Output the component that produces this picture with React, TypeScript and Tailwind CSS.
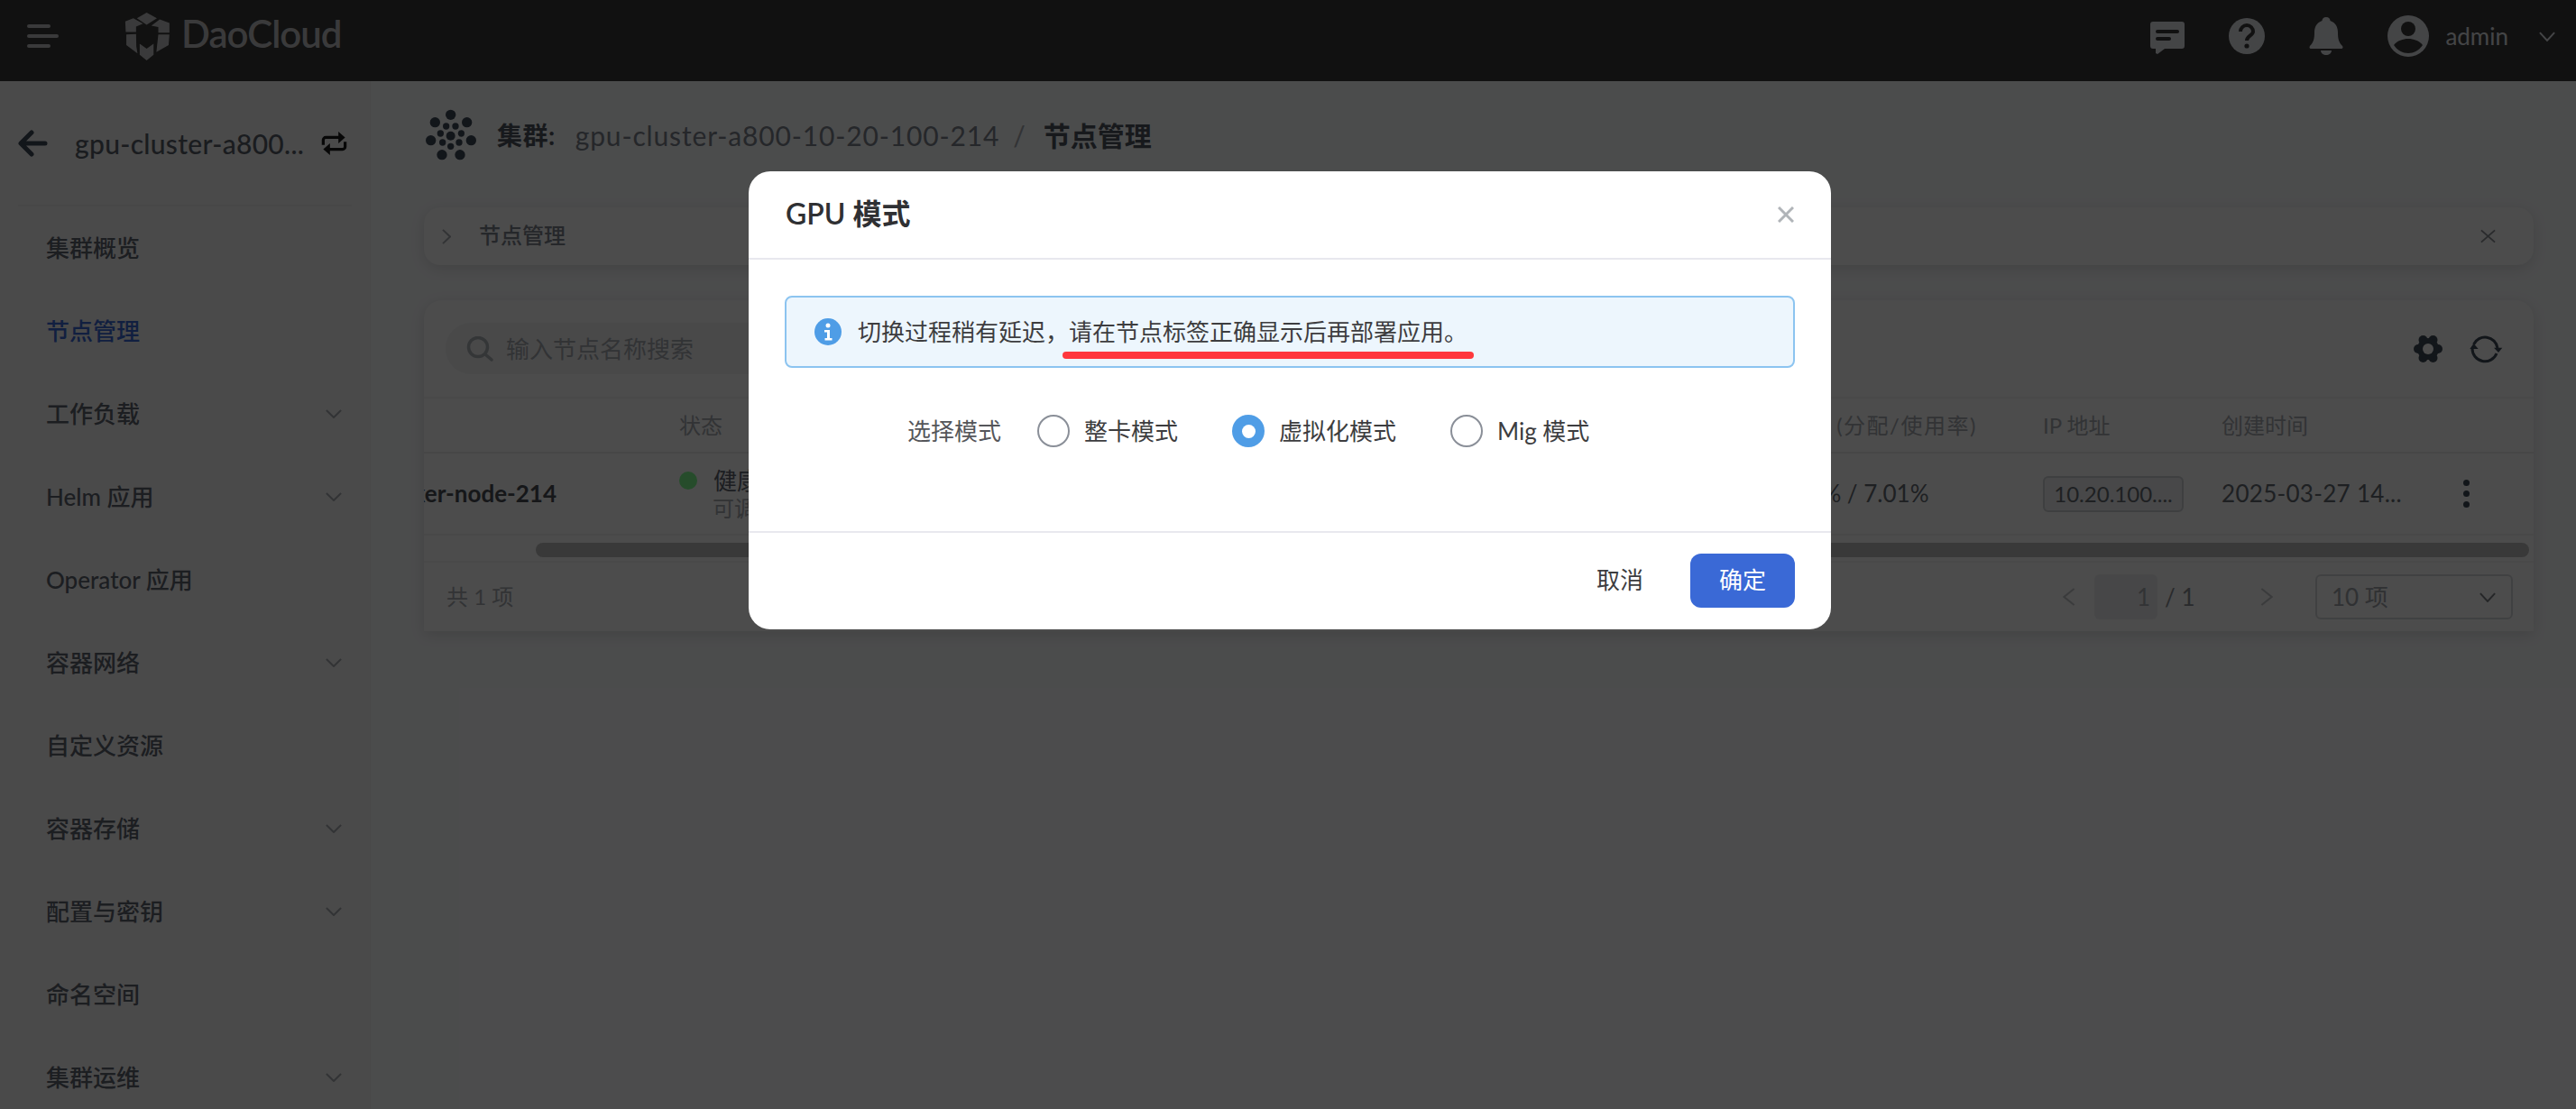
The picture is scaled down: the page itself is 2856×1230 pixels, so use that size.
import React from "react";

const Chevron = ({ dir, className }: { dir: "down" | "left" | "right"; className: string }) => {
  const d = dir === "down" ? "M1 2l9 16 9-16" : dir === "left" ? "M18 1L2 10l16 9" : "M2 1l16 9-16 9";
  return (
    <svg viewBox="0 0 20 20" preserveAspectRatio="none" fill="none" stroke="currentColor" strokeWidth="2" className={className}>
      <path d={d} vectorEffect="non-scaling-stroke" />
    </svg>
  );
};

const Logo = () => (
  <svg viewBox="30 12 172 184" className="h-[57px] w-[53px]" fill="#c4c4c6">
    <polygon points="78,38 113,18 150,38 113,62" />
    <polygon points="36,50 65,38 100,58 75,68 75,88 38,88" />
    <polygon points="130,65 160,42 195,55 195,90 155,90 155,70" />
    <polygon points="40,97 75,95 76,140 80,165 40,135" />
    <polygon points="88,130 113,148 138,130 138,170 113,190 88,170" />
    <polygon points="155,97 195,97 192,135 148,160" />
  </svg>
);

const ClusterIcon = () => (
  <svg viewBox="0 0 210 210" className="h-[70px] w-[70px]" fill="#3f4a58">
    {[[104,37],[52,62],[158,62],[38,122],[172,122],[75,170],[135,170]].map(([x,y]) => <circle key={`${x}-${y}`} cx={x} cy={y} r="17" />)}
    {[[89,75],[120,75],[70,99],[139,99],[77,129],[132,129],[104,142]].map(([x,y]) => <circle key={`${x}-${y}`} cx={x} cy={y} r="11" />)}
    <circle cx="104" cy="107" r="15" />
  </svg>
);

const navItems: [string, boolean, boolean][] = [
  ["集群概览", false, false],
  ["节点管理", false, true],
  ["工作负载", true, false],
  ["Helm 应用", true, false],
  ["Operator 应用", false, false],
  ["容器网络", true, false],
  ["自定义资源", false, false],
  ["容器存储", true, false],
  ["配置与密钥", true, false],
  ["命名空间", false, false],
  ["集群运维", true, false],
];

function TopBar() {
  return (
    <header className="flex h-[90px] shrink-0 items-center bg-[#393939] pb-[10px] text-[#e4e6ec]">
      <div className="ml-[30px] flex w-[36px] flex-col gap-[7px]">
        <span className="h-[4px] w-[26px] rounded-full bg-[#c4c4c6]" />
        <span className="h-[4px] w-[35px] rounded-full bg-[#c4c4c6]" />
        <span className="h-[4px] w-[26px] rounded-full bg-[#c4c4c6]" />
      </div>
      <div className="ml-[71px] flex items-center gap-[11px]">
        <Logo />
        <span className="-mt-[6px] text-[42px] font-semibold leading-none tracking-[-1px] text-[#c4c4c6]">DaoCloud</span>
      </div>
      <div className="ml-auto flex items-center">
        <svg viewBox="0 0 40 38" className="mt-[4px] h-[38px] w-[40px]" fill="currentColor">
          <path d="M4 1h32a3 3 0 013 3v24a3 3 0 01-3 3H17l-8 6-2-1v-5H4a3 3 0 01-3-3V4a3 3 0 013-3z" />
          <rect x="7" y="10" width="26" height="4" rx="2" fill="#393939" />
          <rect x="7" y="18" width="17" height="4" rx="2" fill="#393939" />
        </svg>
        <svg viewBox="0 0 40 40" className="ml-[48px] h-[40px] w-[40px]">
          <circle cx="20" cy="20" r="20" fill="currentColor" />
          <path d="M13 15a7 7 0 1114 0c0 4-7 5-7 10" fill="none" stroke="#393939" strokeWidth="4" />
          <circle cx="20" cy="31" r="2.6" fill="#393939" />
        </svg>
        <svg viewBox="0 0 38 42" className="ml-[49px] h-[42px] w-[38px]" fill="currentColor">
          <path d="M19 0c3 0 4.500 2 4.500 4 6 2 8.500 7 8.500 13 0 7 1 11 5 15 1 1 .5 3-1 3H2c-1.500 0-2-2-1-3 4-4 5-8 5-15 0-6 2.500-11 8.500-13C14.500 2 16 0 19 0z" />
          <path d="M13 37h12c0 3-3 5-6 5s-6-2-6-5z" />
        </svg>
        <svg viewBox="0 0 46 46" className="ml-[49px] h-[46px] w-[46px]">
          <circle cx="23" cy="23" r="23" fill="currentColor" />
          <circle cx="23" cy="15" r="8" fill="#393939" />
          <path d="M7 33c4-5 10-7 16-7s12 2 16 7c-4 6-10 9-16 9S11 39 7 33z" fill="#393939" />
        </svg>
        <span className="ml-[18px] text-[26px] leading-none">admin</span>
        <Chevron dir="down" className="ml-[34px] mr-[23px] h-[11px] w-[18px]" />
      </div>
    </header>
  );
}

function Sidebar() {
  return (
    <aside className="w-[411px] shrink-0 overflow-hidden border-r border-[#f0f0f0] bg-[#f7f7f7]">
      <div className="mx-[20px] flex h-[139px] items-center border-b-2 border-[#eeeeee]">
        <svg viewBox="0 0 33 30" className="h-[30px] w-[33px] shrink-0" fill="none" stroke="#3f4a58" strokeWidth="5" strokeLinecap="round" strokeLinejoin="round">
          <path d="M30 15H4M15 3L3 15l12 12" />
        </svg>
        <span className="ml-[30px] w-[262px] shrink-0 whitespace-nowrap text-[30px] font-medium leading-none tracking-[0.3px] text-[#59606a]">gpu-cluster-a800...</span>
        <svg viewBox="0 0 32 30" className="ml-[10px] h-[28px] w-[31px] shrink-0" fill="none" stroke="#1a1a1a" strokeWidth="3.500" strokeLinejoin="round">
          <path d="M3 17v-6a3 3 0 013-3h19" />
          <path d="M29 13v6a3 3 0 01-3 3H7" />
          <path d="M21 1l8 7-8 7zM11 15l-8 7 8 7z" fill="#1a1a1a" stroke="none" />
        </svg>
      </div>
      <nav>
        {navItems.map(([label, hasChevron, active]) => (
          <div key={label} className={`flex h-[92px] items-center pl-[51px] pr-[31px] text-[26px] font-medium ${active ? "text-[#3a69d6]" : "text-[#5e6470]"}`}>
            <span>{label}</span>
            {hasChevron && <Chevron dir="down" className="ml-auto h-[10px] w-[18px] text-[#a8acb2]" />}
          </div>
        ))}
      </nav>
    </aside>
  );
}

function Toolbar() {
  return (
    <div className="flex h-[109px] items-center border-b-2 border-[#f4f4f4] pl-[24px] pr-[34px]">
      <div className="flex h-[57px] w-[700px] items-center rounded-full bg-[#f3f4f6] pl-[23px]">
        <svg viewBox="0 0 30 28" className="h-[28px] w-[30px]" fill="none" stroke="#b0b4ba" strokeWidth="3.500" strokeLinecap="round">
          <circle cx="13" cy="12" r="10.500" />
          <path d="M21 20l7 6" />
        </svg>
        <span className="ml-[14px] text-[26px] leading-none text-[#a8acb2]">输入节点名称搜索</span>
      </div>
      <svg viewBox="0 0 34 32" className="ml-auto h-[32px] w-[34px]" fill="#3f4a58">
        {[[28,16],[6,16],[22.5,6],[11.5,6],[22.5,26],[11.5,26]].map(([x,y]) => <circle key={`${x}-${y}`} cx={x} cy={y} r="5" />)}
        <circle cx="17" cy="16" r="12" />
        <circle cx="17" cy="16" r="6" fill="#fdfdfd" />
      </svg>
      <svg viewBox="0 0 37 32" className="ml-[29px] h-[32px] w-[37px]" fill="none" stroke="#3f4a58" strokeWidth="3">
        <path d="M4.500 11A14 14 0 0131 15" />
        <path d="M30 21A14 14 0 013 15.500" />
        <path d="M4.500 10L.3 16h9.400zM27 14.700h9.300L32 20z" fill="#3f4a58" stroke="none" />
      </svg>
    </div>
  );
}

function NodeTable() {
  return (
    <div className="mt-[39px] overflow-hidden rounded-t-[20px] bg-[#fdfdfd] shadow-[0_4px_16px_rgba(0,0,0,0.12)]">
      <Toolbar />
      <div className="flex h-[61px] items-center border-b-2 border-[#eeeeee] text-[24px] text-[#a8acb2]">
        <div className="w-[283px] shrink-0" />
        <div className="w-[1229px] shrink-0">状态</div>
        <div className="w-[283px] shrink-0 whitespace-nowrap">内存 <span className="tracking-[1.5px]">(分配/使用率)</span></div>
        <div className="w-[198px] shrink-0">IP 地址</div>
        <div>创建时间</div>
      </div>
      <div className="flex h-[91px] items-center border-b-2 border-[#f2f2f2]">
        <div className="flex w-[283px] shrink-0 justify-end overflow-hidden whitespace-nowrap pr-[136px] text-[26px] font-bold text-[#4a4e55]">
          <span className="shrink-0">worker-node-214</span>
        </div>
        <div className="w-[1216px] shrink-0">
          <div className="flex items-center">
            <span className="h-[20px] w-[20px] rounded-full bg-[#7fff90]" />
            <span className="ml-[18px] text-[26px] leading-[32px] text-[#5e6470]">健康</span>
          </div>
          <div className="ml-[37px] text-[24px] leading-[30px] text-[#a8acb2]">可调度</div>
        </div>
        <div className="w-[296px] shrink-0 text-[26px] text-[#666c74]">0.26% / 7.01%</div>
        <div className="w-[198px] shrink-0">
          <span className="flex h-[40px] w-[156px] items-center justify-center rounded-[6px] border-2 border-[#cfd2d6] bg-[#f0f1f3] text-[24px] text-[#666c74]">10.20.100....</span>
        </div>
        <div className="w-[268px] shrink-0 whitespace-nowrap text-[26px] tracking-[0.3px] text-[#666c74]">2025-03-27 14...</div>
        <div className="flex flex-col gap-[5px]">
          <span className="h-[7px] w-[7px] rounded-full bg-[#3f4a58]" />
          <span className="h-[7px] w-[7px] rounded-full bg-[#3f4a58]" />
          <span className="h-[7px] w-[7px] rounded-full bg-[#3f4a58]" />
        </div>
      </div>
      <div className="h-[30px] border-b-2 border-[#f4f4f4] pl-[124px] pr-[5px] pt-[8px]">
        <div className="h-[16px] w-full rounded-full bg-[#c0c0c0]" />
      </div>
      <div className="flex h-[76px] items-center pl-[25px] text-[24px]">
        <span className="text-[#a8acb2]">共 1 项</span>
        <div className="ml-auto flex items-center text-[26px]">
          <Chevron dir="left" className="h-[20px] w-[14px] text-[#c4c6ca]" />
          <div className="ml-[21px] flex h-[50px] w-[70px] items-center justify-end rounded-[6px] bg-[#eeeff1] pr-[8px] text-[#a8acb2]">1</div>
          <span className="ml-[8px] w-[28px] whitespace-nowrap text-[#8a8e94]">/ 1</span>
          <Chevron dir="right" className="ml-[78px] h-[20px] w-[14px] text-[#c4c6ca]" />
          <div className="ml-[47px] mr-[23px] flex h-[50px] w-[219px] items-center rounded-[6px] border-2 border-[#d8dade] pl-[16px] pr-[17px] text-[#a0a4aa]">
            <span>10 项</span>
            <Chevron dir="down" className="ml-auto h-[11px] w-[18px] text-[#7c8086]" />
          </div>
        </div>
      </div>
    </div>
  );
}

function Radio({ label, checked, className }: { label: string; checked?: boolean; className?: string }) {
  return (
    <div className={`flex items-center ${className ?? ""}`}>
      {checked ? (
        <span className="flex h-[36px] w-[36px] items-center justify-center rounded-full bg-[#4f9de6]">
          <span className="h-[15px] w-[15px] rounded-full bg-white" />
        </span>
      ) : (
        <span className="h-[36px] w-[36px] rounded-full border-2 border-[#8a8f98]" />
      )}
      <span className="ml-[16px] whitespace-nowrap text-[26px] text-[#3d3d3f]">{label}</span>
    </div>
  );
}

function Dialog() {
  return (
    <div className="flex h-[508px] w-[1200px] flex-col overflow-hidden rounded-[24px] bg-white">
      <div className="flex h-[98px] shrink-0 items-center justify-between border-b-2 border-[#e8e8ee] pl-[41px] pr-[41px]">
        <span className="mb-[3px] text-[32px] font-semibold leading-none text-[#2f3033]">GPU 模式</span>
        <svg viewBox="0 0 18 18" className="h-[18px] w-[18px]" fill="none" stroke="#b0b4b8" strokeWidth="3">
          <path d="M1 1l16 16M17 1L1 17" />
        </svg>
      </div>
      <div className="flex-1 px-[40px] pt-[40px]">
        <div className="relative flex h-[80px] items-center rounded-[8px] border-2 border-[#8cc4f0] bg-[#edf6fd] pl-[31px]">
          <svg viewBox="0 0 30 30" className="h-[30px] w-[30px] shrink-0">
            <circle cx="15" cy="15" r="15" fill="#4f9de6" />
            <circle cx="15" cy="8" r="2.500" fill="#fff" />
            <path d="M11 13h6v9h2.500v2.500h-8V22H14v-6.500h-3z" fill="#fff" />
          </svg>
          <span className="ml-[18px] whitespace-nowrap text-[26px] text-[#3d3d3f]">切换过程稍有延迟，请在节点标签正确显示后再部署应用。</span>
          <span className="absolute left-[306px] top-[60px] h-[8px] w-[456px] rounded-full bg-[#ff383c]" />
        </div>
        <div className="mt-[52px] flex h-[36px] items-center pl-[136px]">
          <span className="w-[144px] shrink-0 text-[26px] text-[#55565a]">选择模式</span>
          <Radio label="整卡模式" className="w-[216px] shrink-0" />
          <Radio label="虚拟化模式" checked className="w-[242px] shrink-0" />
          <Radio label="Mig 模式" />
        </div>
      </div>
      <div className="flex h-[109px] shrink-0 items-center justify-end border-t-2 border-[#e8e8ee] pb-[2px] pr-[40px] text-[26px]">
        <span className="text-[#3d3d3f]">取消</span>
        <button className="ml-[52px] h-[60px] w-[116px] rounded-[12px] bg-[#3a69d6] text-white">确定</button>
      </div>
    </div>
  );
}

export default function App() {
  return (
    <div className="relative flex h-screen w-full flex-col overflow-hidden bg-[#fcfdff] font-[Lato,'Noto_Sans_CJK_SC',sans-serif]">
      <TopBar />
      <div className="flex min-h-0 flex-1">
        <Sidebar />
        <main className="min-w-0 flex-1 pl-[59px] pr-[47px]">
          <div className="mt-[32px] flex h-[56px] items-center whitespace-nowrap">
            <div className="-ml-[5px] -mr-[2px]"><ClusterIcon /></div>
            <span className="ml-[18px] text-[28px] font-bold tracking-[0.5px] text-[#4f5660]">集群:</span>
            <span className="ml-[22px] text-[30px] tracking-[0.85px] text-[#7c828c]">gpu-cluster-a800-10-20-100-214</span>
            <span className="ml-[15px] text-[30px] text-[#a8acb2]">/</span>
            <span className="ml-[20px] text-[30px] font-bold text-[#4f5660]">节点管理</span>
          </div>
          <div className="mt-[52px] flex h-[64px] items-center rounded-[18px] bg-[#fdfdfd] pl-[20px] pr-[42px] shadow-[0_4px_16px_rgba(0,0,0,0.12)]">
            <Chevron dir="right" className="h-[17px] w-[10px] text-[#a8acb2]" />
            <span className="mb-[2px] ml-[31px] text-[24px] font-medium text-[#7c828c]">节点管理</span>
            <svg viewBox="0 0 18 16" className="ml-auto h-[16px] w-[17px]" fill="none" stroke="#8a8e94" strokeWidth="2">
              <path d="M1 1l16 14M17 1L1 15" />
            </svg>
          </div>
          <NodeTable />
        </main>
      </div>
      <div className="absolute inset-0 flex items-start justify-center bg-black/70 pl-[4px] pt-[190px]">
        <Dialog />
      </div>
    </div>
  );
}
